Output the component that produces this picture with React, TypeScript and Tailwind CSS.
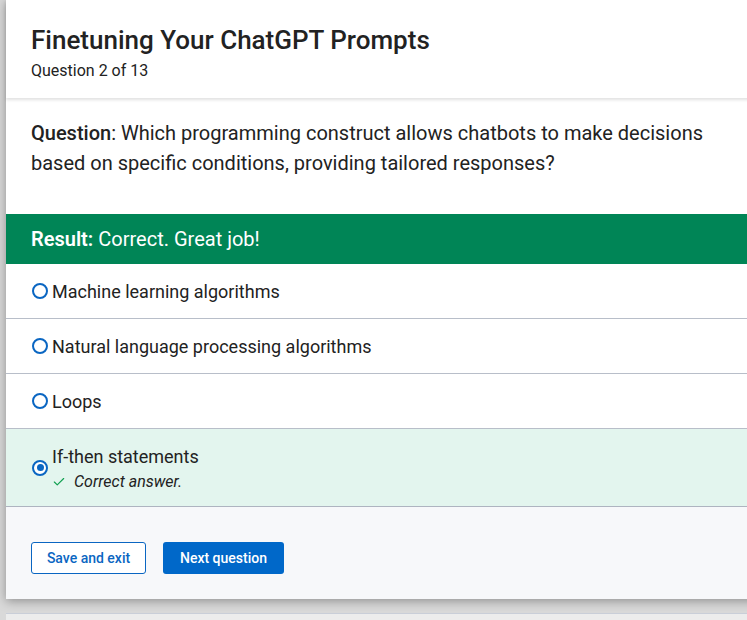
import { Check } from "lucide-react";

type Opcion = {
  id: number;
  texto: string;
  correcta?: boolean;
};

const opciones: Opcion[] = [
  { id: 1, texto: "Machine learning algorithms" },
  { id: 2, texto: "Natural language processing algorithms" },
  { id: 3, texto: "Loops" },
  { id: 4, texto: "If-then statements", correcta: true },
];

function Radio({ checked }: { checked?: boolean }) {
  return (
    <span className="flex h-4 w-4 shrink-0 items-center justify-center rounded-full border-2 border-[#0a66c2] bg-white">
      {checked ? <span className="h-[7px] w-[7px] rounded-full bg-[#0a66c2]" /> : null}
    </span>
  );
}

export default function App() {
  return (
    <main
      className="h-[620px] overflow-hidden bg-[#d9d9d9] pl-[6px] text-[#222]"
      style={{ fontFamily: "Roboto, 'Liberation Sans', sans-serif" }}
    >
      <div className="w-[780px] bg-white shadow-[0_2px_10px_rgba(0,0,0,0.35)]">
        <header className="relative z-10 h-[98px] bg-white px-[25px] pt-[25px] shadow-[0_2px_3px_rgba(0,0,0,0.12)]">
          <h1 className="text-[26px] font-medium leading-[31px] text-[#222]">
            Finetuning Your ChatGPT Prompts
          </h1>
          <p className="mt-[5px] text-[16px] leading-[19px] text-[#222]">Question 2 of 13</p>
        </header>

        <section className="px-[25px] pt-[20px] pb-[36px]">
          <p className="text-[20px] leading-[30px] text-[#222]">
            <span className="font-medium">Question</span>: Which programming construct allows chatbots to make decisions
            <br />
            based on specific conditions, providing tailored responses?
          </p>
        </section>

        <div className="flex h-[50px] items-center bg-[#008556] px-[25px] text-[20px] text-white">
          <span className="font-semibold">Result:</span>
          <span className="ml-[5px]">Correct. Great job!</span>
        </div>

        <ul className="border-b border-[#aeb4c0]">
          {opciones.map((opcion, index) =>
            opcion.correcta ? (
              <li
                key={opcion.id}
                className="flex h-[78px] items-center gap-[4px] border-t border-[#b8bec9] bg-[#e3f5ee] pr-[25px] pl-[26px]"
              >
                <Radio checked />
                <div className="mt-[3px]">
                  <p className="text-[18px] leading-[25px]">{opcion.texto}</p>
                  <p className="flex items-center gap-[8px] text-[16px] italic leading-[25px]">
                    <Check className="h-[14px] w-[14px] text-[#10a050]" strokeWidth={2} />
                    Correct answer.
                  </p>
                </div>
              </li>
            ) : (
              <li
                key={opcion.id}
                className={`flex items-center gap-[4px] pr-[25px] pl-[26px] ${index === 0 ? "h-[54px]" : "h-[55px] border-t border-[#b8bec9]"}`}
              >
                <Radio />
                <span className="text-[18px] leading-[25px]">{opcion.texto}</span>
              </li>
            )
          )}
        </ul>

        <footer className="flex h-[92px] items-center gap-[17px] bg-[#f7f8fa] px-[25px] pt-[10px]">
          <button className="h-[32px] w-[115px] rounded-[3px] border border-[#0a66c2] bg-white text-[14px] font-medium text-[#0a66c2]">
            Save and exit
          </button>
          <button className="h-[32px] w-[121px] rounded-[3px] bg-[#0068c9] text-[14px] font-medium text-white">
            Next question
          </button>
        </footer>
      </div>
      <div className="mt-[14px] h-px bg-[#c9ced8]" />
      <div className="h-[20px] bg-[#ececec]" />
    </main>
  );
}
